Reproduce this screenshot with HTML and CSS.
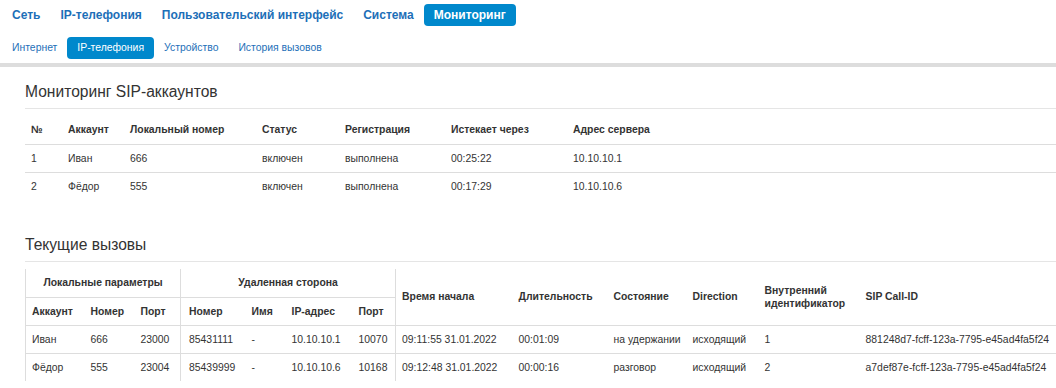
FILE: index.html
```html
<html>
<head>
  <title>Мониторинг | IP-телефония</title>
  <link rel="stylesheet" href="styles.css">
</head>
<body>

<div class="menu">
  <a class="menu-item">Сеть</a>
  <a class="menu-item">IP-телефония</a>
  <a class="menu-item">Пользовательский интерфейс</a>
  <a class="menu-item">Система</a>
  <a class="menu-item active">Мониторинг</a>
</div>

<div class="submenu">
  <a class="submenu-item">Интернет</a>
  <a class="submenu-item active">IP-телефония</a>
  <a class="submenu-item">Устройство</a>
  <a class="submenu-item">История вызовов</a>
</div>

<div class="content">
  <h2 class="section-title">Мониторинг SIP-аккаунтов</h2>
  <table class="grid">
    <colgroup>
      <col class="w37"><col class="w62"><col class="w132"><col class="w83"><col class="w106"><col class="w122"><col class="w489">
    </colgroup>
    <thead>
      <tr>
        <th>№</th><th>Аккаунт</th><th>Локальный номер</th><th>Статус</th><th>Регистрация</th><th>Истекает через</th><th>Адрес сервера</th>
      </tr>
    </thead>
    <tbody>
      <tr>
        <td>1</td><td>Иван</td><td>666</td><td>включен</td><td>выполнена</td><td>00:25:22</td><td>10.10.10.1</td>
      </tr>
      <tr>
        <td>2</td><td>Фёдор</td><td>555</td><td>включен</td><td>выполнена</td><td>00:17:29</td><td>10.10.10.6</td>
      </tr>
    </tbody>
  </table>

  <h2 class="section-title second">Текущие вызовы</h2>
  <table class="grid calls">
    <colgroup>
      <col class="w59"><col class="w50"><col class="w46"><col class="w65"><col class="w40"><col class="w67"><col class="w43">
      <col class="w117"><col class="w95"><col class="w79"><col class="w72"><col class="w101"><col class="w197">
    </colgroup>
    <thead>
      <tr>
        <th colspan="3" class="group center">Локальные параметры</th>
        <th colspan="4" class="group center">Удаленная сторона</th>
        <th rowspan="2" class="group">Время начала</th>
        <th rowspan="2">Длительность</th>
        <th rowspan="2">Состояние</th>
        <th rowspan="2">Direction</th>
        <th rowspan="2" class="wrap">Внутренний идентификатор</th>
        <th rowspan="2">SIP Call-ID</th>
      </tr>
      <tr class="sub">
        <th class="group">Аккаунт</th><th>Номер</th><th>Порт</th>
        <th class="group">Номер</th><th>Имя</th><th>IP-адрес</th><th>Порт</th>
      </tr>
    </thead>
    <tbody>
      <tr>
        <td class="group">Иван</td><td>666</td><td>23000</td>
        <td class="group">85431111</td><td>-</td><td>10.10.10.1</td><td>10070</td>
        <td class="group">09:11:55 31.01.2022</td><td>00:01:09</td><td>на удержании</td><td>исходящий</td><td>1</td>
        <td>881248d7-fcff-123a-7795-e45ad4fa5f24</td>
      </tr>
      <tr>
        <td class="group">Фёдор</td><td>555</td><td>23004</td>
        <td class="group">85439999</td><td>-</td><td>10.10.10.6</td><td>10168</td>
        <td class="group">09:12:48 31.01.2022</td><td>00:00:16</td><td>разговор</td><td>исходящий</td><td>2</td>
        <td>a7def87e-fcff-123a-7795-e45ad4fa5f24</td>
      </tr>
    </tbody>
  </table>
</div>

</body>
</html>
```

FILE: styles.css
```css
:root {
  --link: #1d6fb8;
  --active: #0088cc;
  --text: #333;
  --line: #ddd;
}

* {
  box-sizing: border-box;
}

body {
  margin: 0;
  font-family: 'Liberation Sans', Arial, sans-serif;
  color: var(--text);
  background: white;
  overflow: hidden;
}

.menu {
  display: flex;
  padding: 4px 0 0 2px;
}

.menu-item {
  padding: 4px 10px;
  line-height: 14px;
  font-size: 12px;
  font-weight: bold;
  color: var(--link);
  border-radius: 4px;
  cursor: pointer;
}

.menu-item.active {
  background: var(--active);
  color: white;
}

.submenu {
  display: flex;
  margin-top: 11px;
  padding: 0 0 4px 2px;
  border-bottom: 4px solid var(--line);
}

.submenu-item {
  padding: 5px 10px;
  line-height: 12px;
  font-size: 10.4px;
  color: var(--link);
  border-radius: 4px;
  cursor: pointer;
}

.submenu-item.active {
  background: var(--active);
  color: white;
}

.content {
  padding: 15px 0 0 25px;
}

.section-title {
  margin: 0;
  padding-bottom: 6px;
  font-size: 15.6px;
  line-height: 20px;
  font-weight: normal;
  color: var(--text);
  border-bottom: 1px solid #e5e5e5;
}

.section-title.second {
  margin-top: 35px;
}

.grid {
  width: 1031px;
  margin-top: 7px;
  border-collapse: collapse;
  table-layout: fixed;
  font-size: 10.4px;
}

.grid th,
.grid td {
  height: 28px;
  padding: 0 6px;
  line-height: 13px;
  text-align: left;
  vertical-align: middle;
  white-space: nowrap;
}

.grid th {
  font-weight: bold;
}

.grid tbody td,
.grid tr.sub th {
  border-top: 1px solid var(--line);
}

.grid .group {
  border-left: 1px solid var(--line);
}

.grid .center {
  text-align: center;
}

.grid .wrap {
  white-space: normal;
}

.calls td:nth-child(4),
.calls tr.sub th:nth-child(4) {
  padding-left: 8px;
}

.w37 { width: 37px; }
.w40 { width: 40px; }
.w43 { width: 43px; }
.w46 { width: 46px; }
.w50 { width: 50px; }
.w59 { width: 59px; }
.w62 { width: 62px; }
.w65 { width: 65px; }
.w67 { width: 67px; }
.w72 { width: 72px; }
.w79 { width: 79px; }
.w83 { width: 83px; }
.w95 { width: 95px; }
.w101 { width: 101px; }
.w106 { width: 106px; }
.w117 { width: 117px; }
.w122 { width: 122px; }
.w132 { width: 132px; }
.w197 { width: 197px; }
.w489 { width: 489px; }
```
